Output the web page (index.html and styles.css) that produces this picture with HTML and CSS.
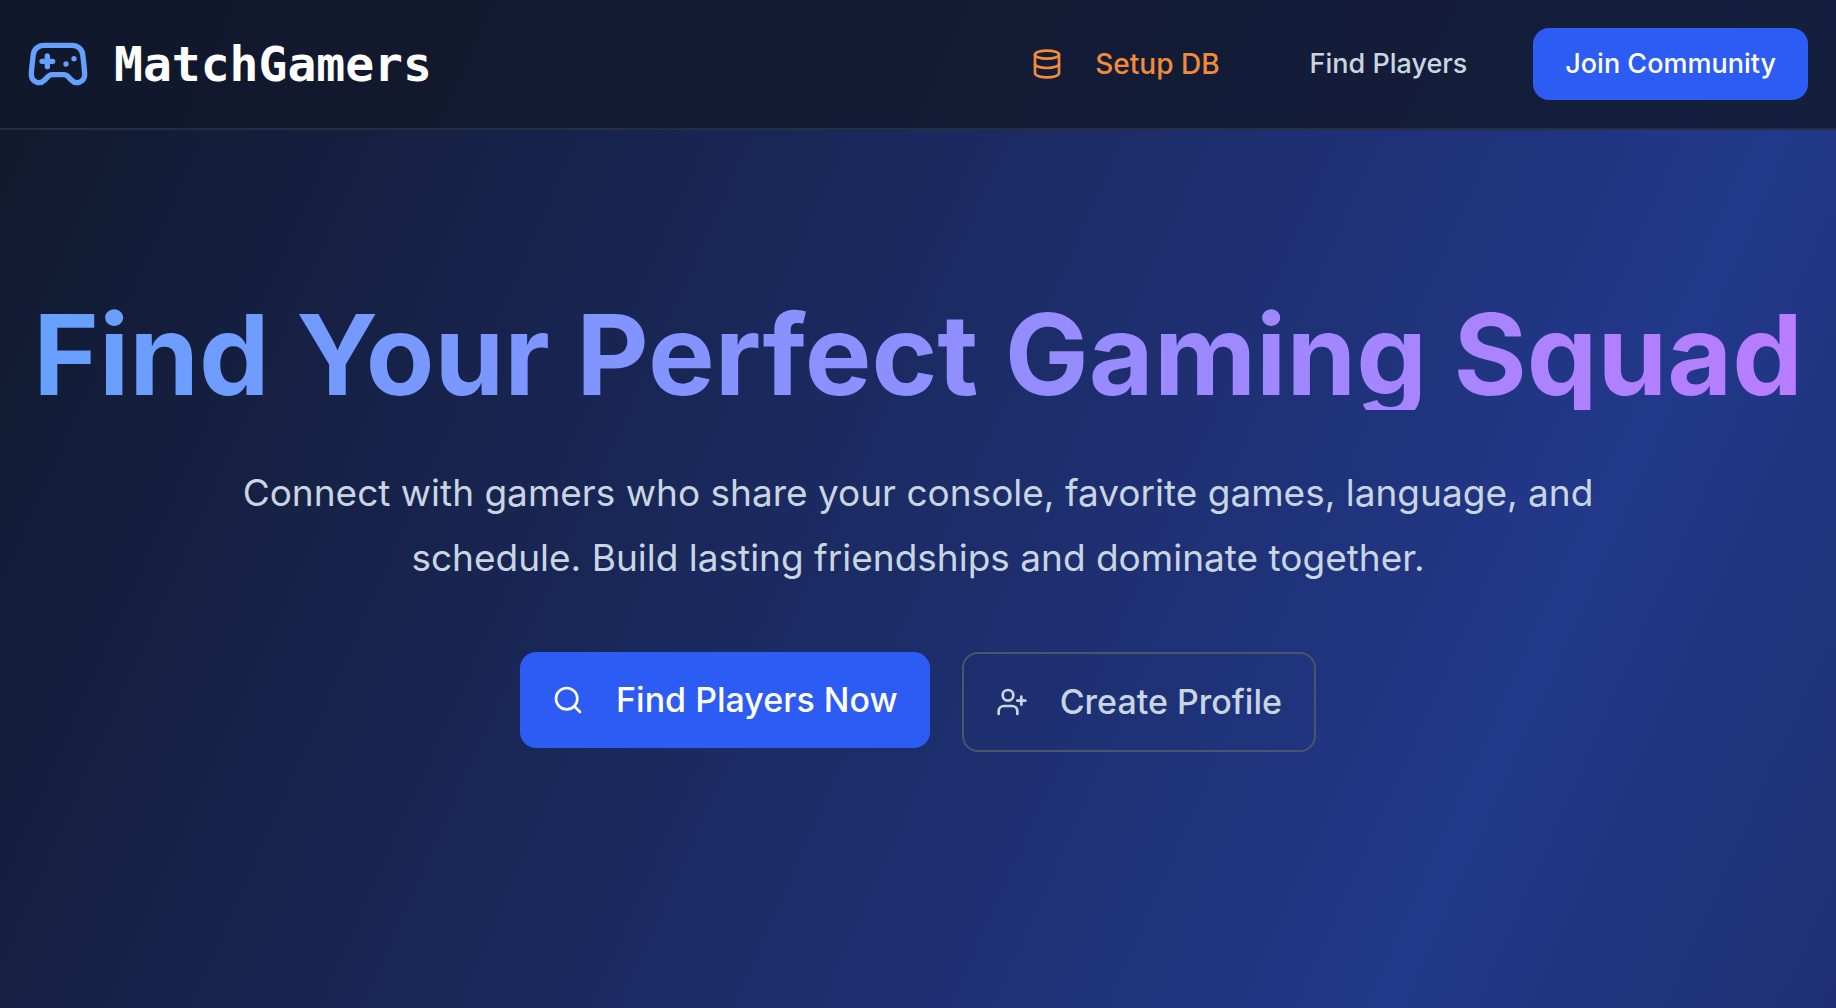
FILE: index.html
```html
<!DOCTYPE html>
<html lang="en">
<head>
    <meta charset="UTF-8">
    <meta name="viewport" content="width=device-width, initial-scale=1.0">
    <title>MatchGamers</title>
    <link rel="stylesheet" href="styles.css">
</head>
<body>
    <header class="site-header">
        <a href="#" class="logo">
            <svg class="logo-icon" viewBox="0 0 24 24">
                <path d="M6 11h4M8 9v4M15 12h.01M18 10h.01"/>
                <path d="M17.32 5H6.68a4 4 0 0 0-3.978 3.59c-.006.052-.01.101-.017.152C2.604 9.416 2 14.456 2 16a3 3 0 0 0 3 3c1 0 1.5-.5 2-1l1.414-1.414A2 2 0 0 1 9.828 16h4.344a2 2 0 0 1 1.414.586L17 18c.5.5 1 1 2 1a3 3 0 0 0 3-3c0-1.545-.604-6.584-.685-7.258-.007-.05-.011-.1-.017-.151A4 4 0 0 0 17.32 5z"/>
            </svg>
            <span class="logo-name">MatchGamers</span>
        </a>
        <nav class="nav">
            <a href="#setup" class="nav-link nav-setup">
                <svg class="icon" viewBox="0 0 24 24">
                    <ellipse cx="12" cy="5" rx="9" ry="3"/>
                    <path d="M3 5v14a9 3 0 0 0 18 0V5"/>
                    <path d="M3 12a9 3 0 0 0 18 0"/>
                </svg>
                Setup DB
            </a>
            <a href="#players" class="nav-link">Find Players</a>
            <button type="button" class="nav-join">Join Community</button>
        </nav>
    </header>

    <main class="hero">
        <h1>Find Your Perfect Gaming Squad</h1>
        <p class="hero-text">Connect with gamers who share your console, favorite games, language, and schedule. Build lasting friendships and dominate together.</p>
        <div class="hero-actions">
            <button type="button" class="btn btn-primary">
                <svg class="icon" viewBox="0 0 24 24">
                    <circle cx="11" cy="11" r="8"/>
                    <path d="m21 21-4.3-4.3"/>
                </svg>
                Find Players Now
            </button>
            <button type="button" class="btn btn-outline">
                <svg class="icon" viewBox="0 0 24 24">
                    <path d="M16 21v-2a4 4 0 0 0-4-4H6a4 4 0 0 0-4 4v2"/>
                    <circle cx="9" cy="7" r="4"/>
                    <path d="M19 8v6M22 11h-6"/>
                </svg>
                Create Profile
            </button>
        </div>
    </main>
</body>
</html>
```
FILE: styles.css
```css
* {
    box-sizing: border-box;
}
body {
    margin: 0;
    min-height: 100vh;
    font-family: Inter, "Liberation Sans", sans-serif;
    color: #fff;
    background-color: #11182b;
    background-image: linear-gradient(to bottom right, #11182b, #22388a, #11182b);
    background-size: 100% 4100px;
    background-repeat: no-repeat;
}
a {
    color: inherit;
    text-decoration: none;
}
button {
    font-family: inherit;
    cursor: pointer;
}
svg {
    flex-shrink: 0;
    fill: none;
    stroke: currentColor;
    stroke-width: 2;
    stroke-linecap: round;
    stroke-linejoin: round;
}
.icon {
    width: 32px;
    height: 32px;
}

/* header */
.site-header {
    display: flex;
    justify-content: space-between;
    align-items: center;
    padding: 28px 28px 28px 26px;
    background-color: rgba(17, 24, 43, 0.8);
    border-bottom: 2px solid #262e42;
}
.logo {
    display: flex;
    align-items: center;
    gap: 24px;
}
.logo-icon {
    width: 64px;
    height: 64px;
    color: #66a0ff;
}
.logo-name {
    font-family: "DejaVu Sans Mono", monospace;
    font-size: 48px;
    font-weight: bold;
    line-height: 64px;
}
.nav {
    display: flex;
    align-items: center;
    gap: 34px;
    font-size: 27px;
    font-weight: 500;
    line-height: 40px;
}
.nav-link {
    display: flex;
    align-items: center;
    gap: 32px;
    padding: 16px 32px;
    color: #cad5e2;
}
.nav-setup {
    padding: 16px 24px;
    color: #f28c38;
    font-size: 28px;
}
.nav-join {
    padding: 16px 32px;
    border: none;
    border-radius: 16px;
    background-color: #2c5cf3;
    color: #fff;
    font-size: 27px;
    font-weight: 500;
    line-height: 40px;
}
.nav-join:hover,
.btn-primary:hover {
    background-color: #2450dc;
}

/* hero */
.hero {
    display: flex;
    flex-direction: column;
    align-items: center;
    padding: 160px 32px;
    text-align: center;
}
h1 {
    margin: 0 0 50px;
    padding-top: 8px;
    font-size: 112px;
    font-weight: 700;
    line-height: 112px;
    white-space: nowrap;
    background-image: linear-gradient(to right, #66a0ff, #b87dff);
    background-clip: text;
    -webkit-background-clip: text;
    color: transparent;
}
.hero-text {
    max-width: 1360px;
    margin: 0 0 62px;
    font-size: 37px;
    line-height: 65px;
    color: #cad5e2;
}
.hero-actions {
    display: flex;
    align-items: flex-start;
    gap: 32px;
}
.btn {
    display: flex;
    align-items: center;
    gap: 32px;
    padding: 20px 32px;
    border: none;
    border-radius: 16px;
    font-size: 34px;
    font-weight: 500;
    line-height: 56px;
}
.btn-primary {
    background-color: #2c5cf3;
    color: #fff;
}
.btn-outline {
    border: 2px solid #4a5568;
    background-color: transparent;
    color: #cad5e2;
}

@media (max-width: 1280px) {
    h1 {
        font-size: 64px;
        line-height: 72px;
        white-space: normal;
    }
    .site-header,
    .nav,
    .hero-actions {
        flex-wrap: wrap;
    }
}
```
